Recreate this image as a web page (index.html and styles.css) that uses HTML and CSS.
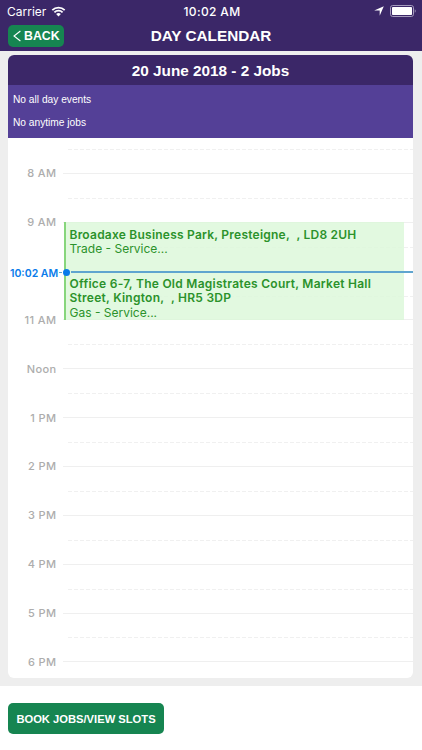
FILE: index.html
```
<!DOCTYPE html>
<html lang="en">
<head>
    <meta charset="UTF-8">
    <meta name="viewport" content="width=device-width, initial-scale=1.0">
    <title>Day Calendar</title>
    <link rel="stylesheet" href="styles.css">
</head>
<body>

    <header class="header">
        <div class="status-bar">
            <div class="status-left">
                <span class="carrier">Carrier</span>
                <svg class="wifi" width="15" height="11" viewBox="0 0 14 11">
                    <path d="M.8 4.1a8.8 8.8 0 0 1 12.4 0M2.9 6.3a5.8 5.8 0 0 1 8.2 0" fill="none" stroke="#fff" stroke-width="1.8"/>
                    <path d="M4.6 8.1a3.4 3.4 0 0 1 4.8 0L7 10.6z" fill="#fff"/>
                </svg>
            </div>
            <span class="clock">10:02 AM</span>
            <div class="status-right">
                <svg width="10" height="10" viewBox="0 0 10 10">
                    <path d="M9.8 .2L5.7 9.8V4.6H.2z" fill="#fff"/>
                </svg>
                <svg width="27" height="12" viewBox="0 0 27 12">
                    <rect x=".5" y=".5" width="23" height="11" rx="2.2" fill="none" stroke="#a59bbd"/>
                    <rect x="2" y="2" width="20" height="8" rx=".8" fill="#fff"/>
                    <path d="M24.7 4.2c1.6.6 1.6 3 0 3.6z" fill="#8c80aa"/>
                </svg>
            </div>
        </div>
        <div class="nav-bar">
            <button class="btn back">
                <svg width="8" height="12" viewBox="0 0 8 12">
                    <path d="M7.4 1L1 6l6.4 5" fill="none" stroke="#fff" stroke-width="1.1"/>
                </svg>
                <span class="back-text">BACK</span>
            </button>
            <h1><span class="page-title">DAY CALENDAR</span></h1>
        </div>
    </header>

    <main class="main">
        <section class="card">
            <h2><span class="date-title">20 June 2018 - 2 Jobs</span></h2>
            <div class="all-day">
                <p>No all day events</p>
                <p>No anytime jobs</p>
            </div>
            <div class="day">
                <div class="hour"><span class="label">8 AM</span></div>
                <div class="hour"><span class="label">9 AM</span></div>
                <div class="hour"><span class="label"></span></div>
                <div class="hour"><span class="label">11 AM</span></div>
                <div class="hour"><span class="label">Noon</span></div>
                <div class="hour"><span class="label">1 PM</span></div>
                <div class="hour"><span class="label">2 PM</span></div>
                <div class="hour"><span class="label">3 PM</span></div>
                <div class="hour"><span class="label">4 PM</span></div>
                <div class="hour"><span class="label">5 PM</span></div>
                <div class="hour"><span class="label">6 PM</span></div>

                <div class="event nine">
                    <div><strong class="place-one">Broadaxe Business Park, Presteigne,&nbsp; , LD8 2UH</strong></div>
                    <div><span class="job">Trade - Service...</span></div>
                </div>
                <div class="event ten">
                    <div><strong class="place-two">Office 6-7, The Old Magistrates Court, Market Hall</strong></div>
                    <div><strong class="place-two">Street, Kington,&nbsp; , HR5 3DP</strong></div>
                    <div><span class="job">Gas - Service...</span></div>
                </div>

                <div class="now">
                    <span class="now-time">10:02 AM</span>
                    <span class="now-tick"></span>
                    <span class="now-dot"></span>
                </div>
            </div>
        </section>
    </main>

    <footer class="footer">
        <button class="btn book">BOOK JOBS/VIEW SLOTS</button>
    </footer>

</body>
</html>
```
FILE: styles.css
```
* {
    box-sizing: border-box;
}
body {
    margin: 0;
    height: 750px;
    overflow: hidden;
    background: #fff;
    font-family: "Liberation Sans", Arial, sans-serif;
}
h1, h2, p {
    margin: 0;
}
.header {
    height: 51px;
    background: #3b2768;
    color: #fff;
}
.status-bar {
    display: grid;
    grid-template-columns: 1fr auto 1fr;
    align-items: center;
    height: 22px;
    padding: 0 5px 0 7px;
    font-family: Inter, sans-serif;
    font-size: 12px;
}
.status-left, .status-right {
    display: flex;
    align-items: center;
}
.status-left {
    gap: 5px;
}
.status-right {
    justify-content: flex-end;
    gap: 6px;
}
.clock {
    font-weight: 500;
    letter-spacing: 0.35px;
}
.nav-bar {
    display: grid;
    grid-template-columns: 1fr auto 1fr;
    align-items: center;
    height: 28px;
    padding: 0 8px;
}
.nav-bar h1 {
    font-size: 15.3px;
    line-height: 20px;
}
.btn {
    display: flex;
    align-items: center;
    border: none;
    border-radius: 5px;
    background: #168551;
    color: #fff;
    font-family: inherit;
    font-weight: bold;
    white-space: nowrap;
}
.back {
    gap: 3px;
    width: 56px;
    height: 22px;
    padding: 0 5px;
    font-size: 12.3px;
}
.back svg {
    flex: none;
}
.main {
    height: 635px;
    padding: 4px 9px 8px 8px;
    background: #eee;
}
.card {
    height: 623px;
    overflow: hidden;
    border-radius: 6px;
    background: #fff;
}
.card h2 {
    height: 30px;
    background: #3b2768;
    color: #fff;
    font-size: 15.3px;
    line-height: 31px;
    text-align: center;
}
.all-day {
    height: 53px;
    padding: 3px 5px;
    background: #544097;
    color: #fff;
    font-size: 10.2px;
    line-height: 23px;
}
.day {
    position: relative;
    padding-top: 11px;
}
.hour {
    display: flex;
    align-items: center;
    gap: 6px;
    height: 48.85px;
    color: #adadad;
    font-family: Inter, sans-serif;
    font-size: 11px;
    font-weight: 500;
    letter-spacing: 0.4px;
    background: repeating-linear-gradient(90deg, #f0f0f0 0 4px, transparent 4px 6px) 60px 0 / 100% 1px no-repeat;
}
.label {
    width: 48.5px;
    text-align: right;
}
.hour::after {
    content: "";
    flex: 1;
    height: 1px;
    background: #efefef;
}
/* events cover the grid lines, tinted so the lines stay faintly visible */
.event {
    position: absolute;
    left: 56px;
    right: 9px;
    height: 49px;
    padding: 5.5px 0 0 3.5px;
    border-left: 2px solid #87d67c;
    background: rgba(220, 248, 217, 0.82);
    color: #2b922b;
    font-family: Inter, sans-serif;
    font-size: 12px;
    line-height: 14.5px;
    white-space: nowrap;
}
.event strong {
    font-weight: 600;
}
.nine {
    top: 84px;
}
.ten {
    top: 133px;
}
.place-one {
    letter-spacing: 0.23px;
}
.place-two {
    letter-spacing: 0.26px;
}
.now {
    position: absolute;
    top: 128px;
    left: 2px;
    right: 0;
    display: flex;
    align-items: center;
    height: 12px;
    color: #087bea;
}
.now::after {
    content: "";
    flex: 1;
    height: 2px;
    background: #5fa5cf;
}
.now-time {
    width: 49px;
    padding-top: 2px;
    font-family: Inter, sans-serif;
    font-size: 10.5px;
    font-weight: 600;
    white-space: nowrap;
}
.now-tick {
    width: 3px;
    height: 1px;
    background: #5fa5cf;
}
.now-dot {
    width: 7px;
    height: 7px;
    margin: 0 1px;
    border-radius: 50%;
    background: #087bea;
}
.footer {
    padding: 17px 8px 0;
}
.book {
    justify-content: center;
    width: 156px;
    height: 31px;
    padding: 0;
    font-size: 11.2px;
}
```
